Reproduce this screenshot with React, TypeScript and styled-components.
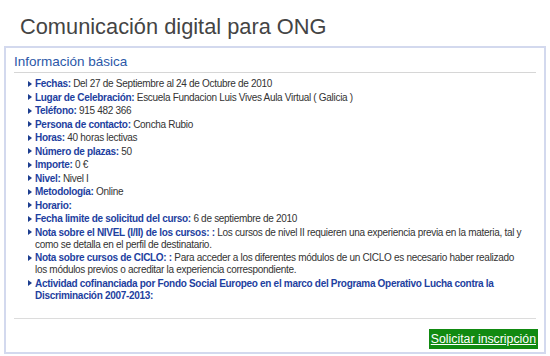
import React from 'react';
import styled, { createGlobalStyle } from 'styled-components';

const GlobalStyle = createGlobalStyle`
  html, body {
    margin: 0;
    padding: 0;
    background: #ffffff;
  }
  body {
    font-family: 'Liberation Sans', Arial, sans-serif;
  }
`;

const Page = styled.div`
  width: 550px;
  height: 356px;
  padding: 14px 4px 0 4px;
  box-sizing: border-box;
  display: flex;
  flex-direction: column;
`;

const Title = styled.h1`
  margin: 0 0 6px 16px;
  font-size: 21.8px;
  line-height: 26px;
  font-weight: normal;
  color: #444444;
`;

const Panel = styled.section`
  height: 308px;
  box-sizing: border-box;
  border: 2px solid #d3d9ee;
  padding: 6px 8px 0 8px;
  display: flex;
  flex-direction: column;
`;

const PanelHeader = styled.h2`
  margin: 0;
  padding-bottom: 2px;
  font-size: 13.5px;
  line-height: 16px;
  font-weight: normal;
  color: #2b58a8;
  border-bottom: 1px solid #d6d6d6;
`;

const List = styled.ul`
  list-style: none;
  margin: 5px 0 0 0;
  padding: 0 13px 0 14px;
  font-size: 10px;
  letter-spacing: -0.3px;
  color: #333333;
`;

const Item = styled.li`
  position: relative;
  padding-left: 7px;
  line-height: 12px;
  margin-bottom: 1.5px;

  &::before {
    content: '';
    position: absolute;
    left: 0;
    top: 2.5px;
    border-left: 4px solid #1c3d8f;
    border-top: 3.5px solid transparent;
    border-bottom: 3.5px solid transparent;
  }
`;

const Label = styled.b`
  color: #1e3fa0;
`;

const Separator = styled.hr`
  margin: 15px 0 0 0;
  border: 0;
  border-top: 1px solid #dcdcdc;
`;

const Footer = styled.div`
  display: flex;
  justify-content: flex-end;
  padding-top: 10px;
  margin-right: -2px;
`;

const ApplyButton = styled.a`
  display: inline-block;
  background: #118a11;
  color: #ffffff;
  font-size: 12.3px;
  line-height: 20px;
  padding: 0 2px;
  text-decoration: underline;
  cursor: pointer;
`;

type Row = { label: string; value?: string };

const rows: Row[] = [
  { label: 'Fechas:', value: 'Del 27 de Septiembre al 24 de Octubre de 2010' },
  { label: 'Lugar de Celebración:', value: 'Escuela Fundacion Luis Vives Aula Virtual ( Galicia )' },
  { label: 'Teléfono:', value: '915 482 366' },
  { label: 'Persona de contacto:', value: 'Concha Rubio' },
  { label: 'Horas:', value: '40 horas lectivas' },
  { label: 'Número de plazas:', value: '50' },
  { label: 'Importe:', value: '0 €' },
  { label: 'Nivel:', value: 'Nivel I' },
  { label: 'Metodología:', value: 'Online' },
  { label: 'Horario:' },
  { label: 'Fecha limite de solicitud del curso:', value: '6 de septiembre de 2010' },
  {
    label: 'Nota sobre el NIVEL (I/II) de los cursos: :',
    value: 'Los cursos de nivel II requieren una experiencia previa en la materia, tal y como se detalla en el perfil de destinatario.',
  },
  {
    label: 'Nota sobre cursos de CICLO: :',
    value: 'Para acceder a los diferentes módulos de un CICLO es necesario haber realizado los módulos previos o acreditar la experiencia correspondiente.',
  },
  {
    label: 'Actividad cofinanciada por Fondo Social Europeo en el marco del Programa Operativo Lucha contra la Discriminación 2007-2013:',
  },
];

const App: React.FC = () => {
  return (
    <>
      <GlobalStyle />
      <Page>
        <Title>Comunicación digital para ONG</Title>
        <Panel>
          <PanelHeader>Información básica</PanelHeader>
          <List>
            {rows.map((row) => (
              <Item key={row.label}>
                <Label>{row.label}</Label>
                {row.value ? ` ${row.value}` : null}
              </Item>
            ))}
          </List>
          <Separator />
          <Footer>
            <ApplyButton>Solicitar inscripción</ApplyButton>
          </Footer>
        </Panel>
      </Page>
    </>
  );
};

export default App;
